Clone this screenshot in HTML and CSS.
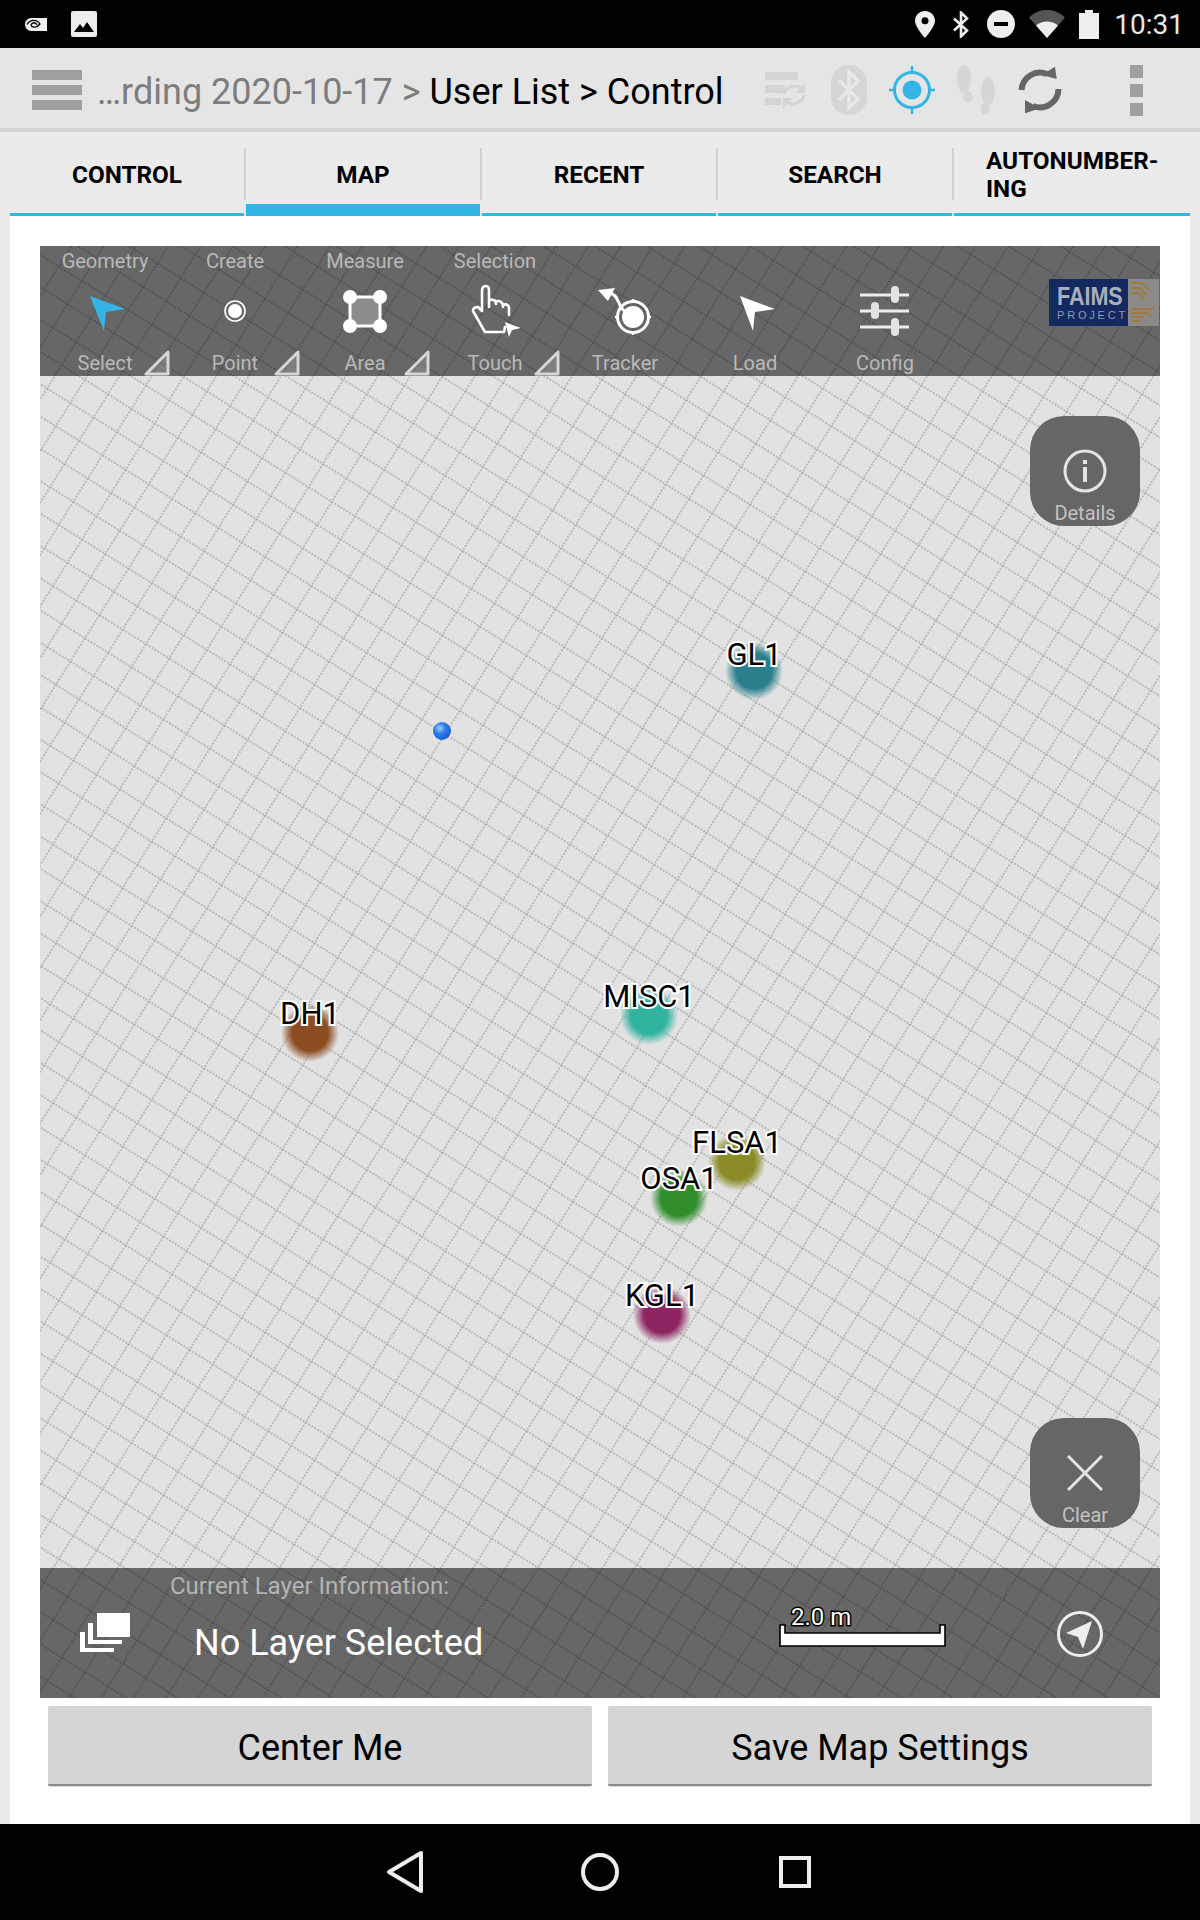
FILE: index.html
```html
<!DOCTYPE html>
<html lang="en">
<head>
  <meta charset="UTF-8">
  <title>Control - Map</title>
  <link rel="stylesheet" href="styles.css">
</head>
<body>

  <div class="status-bar">
    <svg class="st-nvidia" viewBox="0 0 22 13"><path d="M6 0H22V13H6C2 13 0 9 0 6.500 0 4 2 0 6 0Z" fill="#eee"/><path d="M2 6.500C5 1 12 1 15 6 12 10 7 10 6 7 7 4 11 4 12 7" fill="none" stroke="#000" stroke-width="1.300"/></svg>
    <svg class="st-pic" viewBox="0 0 26 26"><rect width="26" height="26" rx="2" fill="#eee"/><path d="M3 21L9 13 12 17 16 11 23 21Z" fill="#000"/></svg>
    <div class="st-right">
      <svg class="st-pin" viewBox="0 0 20 27"><path fill-rule="evenodd" d="M10 0C4.500 0 0 4.300 0 9.800 0 16 10 27 10 27S20 16 20 9.800C20 4.300 15.500 0 10 0ZM10 6.300A3.500 3.500 0 1 1 10 13.300 3.500 3.500 0 0 1 10 6.300Z" fill="#eee"/></svg>
      <svg class="st-bt" viewBox="0 0 18 27"><path d="M2 7.500L15 19.500 9 25.500V1.500L15 7.500 2 19.500" fill="none" stroke="#eee" stroke-width="2.600"/></svg>
      <svg class="st-dnd" viewBox="0 0 28 28"><circle cx="14" cy="14" r="14" fill="#eee"/><rect x="7" y="12" width="14" height="4" fill="#000"/></svg>
      <svg class="st-wifi" viewBox="0 0 36 28"><path d="M0 7.500C10 -2.500 26 -2.500 36 7.500L18 28Z" fill="#555"/><path d="M7 15.500C13 10 23 10 29 15.500L18 28Z" fill="#eee"/></svg>
      <svg class="st-batt" viewBox="0 0 20 29"><path d="M6 0H14V3H20V29H0V3H6Z" fill="#eee"/></svg>
      <span class="clock">10:31</span>
    </div>
  </div>

  <div class="action-bar">
    <div class="hamburger"><span></span><span></span><span></span></div>
    <div class="crumbs"><span class="crumb-old">…rding 2020-10-17 &gt; </span>User List &gt; Control</div>
    <div class="action-icons">
      <svg class="ic-storage" viewBox="0 0 40 36"><path d="M0 0H33V8H0ZM0 13H20V21H0ZM0 26H16V33H0Z" fill="#d4d4d4"/><path d="M19 22A11 11 0 0 1 37 17M39 23A11 11 0 0 1 22 30" fill="none" stroke="#d4d4d4" stroke-width="3"/><path d="M40 11V21H30ZM18 36V26H28Z" fill="#d4d4d4"/></svg>
      <svg class="ic-bt" viewBox="0 0 36 50"><rect width="36" height="50" rx="18" fill="#d6d6d6"/><path d="M8 15L27 34 18 43V7L27 16 8 35" fill="none" stroke="#e8e8e8" stroke-width="3.500"/></svg>
      <svg class="ic-gps" viewBox="0 0 46 48"><circle cx="23" cy="24" r="17.500" fill="none" stroke="#33b5e5" stroke-width="3"/><circle cx="23" cy="24" r="9.500" fill="#33b5e5"/><path d="M23 0V7M23 41V48M0 24H6M40 24H46" stroke="#33b5e5" stroke-width="2.500"/></svg>
      <svg class="ic-feet" viewBox="0 0 39 50"><ellipse cx="7" cy="14" rx="7" ry="14" fill="#d6d6d6"/><ellipse cx="11" cy="32" rx="4.500" ry="5.500" fill="#d6d6d6"/><ellipse cx="31" cy="26" rx="7" ry="14" fill="#d6d6d6"/><ellipse cx="28" cy="44" rx="4.500" ry="5.500" fill="#d6d6d6"/></svg>
      <svg class="ic-sync" viewBox="0 0 44 50"><path d="M3.500 25A18.500 18.500 0 0 1 29 9M40.500 24A18.500 18.500 0 0 1 15 41" fill="none" stroke="#666" stroke-width="6"/><path d="M37 1.700L38.700 14 23.700 10ZM7 35V48.300L22 43.300Z" fill="#666"/></svg>
      <div class="overflow"><span></span><span></span><span></span></div>
    </div>
  </div>

  <div class="tabs">
    <div class="tab">CONTROL</div>
    <div class="tab selected">MAP</div>
    <div class="tab">RECENT</div>
    <div class="tab">SEARCH</div>
    <div class="tab tab-wrap">AUTONUMBER-<br>ING</div>
  </div>

  <main class="content">
    <div class="map">
      <svg class="grid" width="1120" height="1452">
        <defs>
          <pattern id="gridCell" width="27.400" height="27.400" patternUnits="userSpaceOnUse" patternTransform="translate(123.300 215) rotate(32) translate(-13.700 -13.700)">
            <path d="M0 13.700H27.400M13.700 0V27.400" stroke="#a0a0a0" stroke-width="1.400" stroke-dasharray="1.712 1.713" fill="none"/>
          </pattern>
        </defs>
        <rect width="1120" height="1452" fill="#e2e2e2"/>
        <rect width="1120" height="1452" fill="url(#gridCell)"/>
      </svg>

      <div class="pin pin-gl"><span class="pin-dot"></span><span class="pin-label">GL1</span></div>
      <div class="pin pin-dh"><span class="pin-dot"></span><span class="pin-label">DH1</span></div>
      <div class="pin pin-misc"><span class="pin-dot"></span><span class="pin-label">MISC1</span></div>
      <div class="pin pin-flsa"><span class="pin-dot"></span><span class="pin-label">FLSA1</span></div>
      <div class="pin pin-osa"><span class="pin-dot"></span><span class="pin-label">OSA1</span></div>
      <div class="pin pin-kgl"><span class="pin-dot"></span><span class="pin-label">KGL1</span></div>
      <div class="me-dot"></div>

      <div class="toolbar">
        <div class="tool">
          <div class="tool-top">Geometry</div>
          <svg class="tool-icon" viewBox="0 0 130 60"><path d="M50 16L85 29 66 32 64 51Z" fill="#33b5e5"/></svg>
          <div class="tool-name">Select</div>
          <svg class="corner" viewBox="0 0 26 26"><path d="M24 2V24H2Z" fill="rgba(255,255,255,.16)" stroke="#d6d6d6" stroke-width="3" stroke-linejoin="round"/></svg>
        </div>
        <div class="tool">
          <div class="tool-top">Create</div>
          <svg class="tool-icon" viewBox="0 0 130 60"><circle cx="65" cy="31" r="10" fill="none" stroke="#fff" stroke-width="1.600"/><circle cx="65" cy="31" r="7" fill="#fff"/></svg>
          <div class="tool-name">Point</div>
          <svg class="corner" viewBox="0 0 26 26"><path d="M24 2V24H2Z" fill="rgba(255,255,255,.16)" stroke="#d6d6d6" stroke-width="3" stroke-linejoin="round"/></svg>
        </div>
        <div class="tool">
          <div class="tool-top">Measure</div>
          <svg class="tool-icon" viewBox="0 0 130 60"><rect x="50" y="17" width="30" height="29" fill="#8c8c8c" stroke="#fff" stroke-width="3"/><circle cx="50" cy="17" r="7" fill="#fff"/><circle cx="80" cy="17" r="7" fill="#fff"/><circle cx="50" cy="46" r="7" fill="#fff"/><circle cx="80" cy="46" r="7" fill="#fff"/></svg>
          <div class="tool-name">Area</div>
          <svg class="corner" viewBox="0 0 26 26"><path d="M24 2V24H2Z" fill="rgba(255,255,255,.16)" stroke="#d6d6d6" stroke-width="3" stroke-linejoin="round"/></svg>
        </div>
        <div class="tool">
          <div class="tool-top">Selection</div>
          <svg class="tool-icon" viewBox="0 0 130 60"><path d="M52 31V11Q52 6 56 6 59 6 59 11V27M59 21Q61 19 63 20 66 20 66 24M66 22Q68 20 71 22 73 23 73 27M73 25Q77 23 79 27V35M52 31L48 27Q43 27 43 31L55 52H74L75 47" fill="none" stroke="#fff" stroke-width="2.600" stroke-linecap="round" stroke-linejoin="round"/><path d="M75 42L91 48 82 50 79 57Z" fill="#fff"/></svg>
          <div class="tool-name">Touch</div>
          <svg class="corner" viewBox="0 0 26 26"><path d="M24 2V24H2Z" fill="rgba(255,255,255,.16)" stroke="#d6d6d6" stroke-width="3" stroke-linejoin="round"/></svg>
        </div>
        <div class="tool">
          <div class="tool-top"></div>
          <svg class="tool-icon" viewBox="0 0 130 60"><path d="M38 10L55 8 48 21Z" fill="#fff"/><path d="M50 13Q56 15 58 21T65 32" fill="none" stroke="#fff" stroke-width="3"/><circle cx="73" cy="37" r="11" fill="#fff"/><circle cx="73" cy="37" r="15.500" fill="none" stroke="#fff" stroke-width="3"/><path d="M73 19V23M73 51V55M55 37H59M87 37H91" stroke="#fff" stroke-width="2.500"/></svg>
          <div class="tool-name">Tracker</div>
        </div>
        <div class="tool">
          <div class="tool-top"></div>
          <svg class="tool-icon" viewBox="0 0 130 60"><path d="M50 16L85 29 65 32 63 51Z" fill="#fff"/></svg>
          <div class="tool-name">Load</div>
        </div>
        <div class="tool">
          <div class="tool-top"></div>
          <svg class="tool-icon" viewBox="0 0 130 60"><path d="M40 15H89M40 31H89M40 47H89" stroke="#eee" stroke-width="3"/><rect x="71" y="6" width="8" height="17" rx="4" fill="#e2e2e2"/><rect x="51" y="22" width="8" height="17" rx="4" fill="#e2e2e2"/><rect x="71" y="38" width="8" height="18" rx="4" fill="#e2e2e2"/></svg>
          <div class="tool-name">Config</div>
        </div>
        <div class="logo">
          <div class="logo-main"><span class="logo-faims">FAIMS</span><span class="logo-project">PROJECT</span></div>
          <svg class="logo-side" viewBox="0 0 31 47"><rect width="31" height="47" fill="#8b8a86"/><path d="M3 4H14L21 11M3 9H12L18 16M3 14H10L16 20M3 30H26M3 34H19L24 38M3 38H15M3 42H12" stroke="#a8742e" stroke-width="1.400" fill="none"/></svg>
        </div>
      </div>

      <div class="bottom-bar">
        <svg class="layers" viewBox="0 0 50 39"><path d="M17 0H50V24H17ZM8 10H13V27H42V31H8ZM0 19H5V35H34V39H0Z" fill="#fff"/></svg>
        <div class="layer-info">
          <div class="layer-caption">Current Layer Information:</div>
          <div class="layer-name">No Layer Selected</div>
        </div>
        <div class="scale">
          <span class="scale-text">2.0 m</span>
          <svg class="scale-bar" viewBox="0 0 167 23"><path d="M1 1H6V9H161V1H166V22H1Z" fill="#fff" stroke="#000" stroke-width="1.600"/></svg>
        </div>
        <svg class="compass" viewBox="0 0 46 46"><circle cx="23" cy="23" r="21.500" fill="none" stroke="#eee" stroke-width="3"/><path d="M35 10L9 22 21 26 26 38Z" fill="#eee"/></svg>
      </div>

      <div class="float-btn float-details">
        <svg class="float-icon" viewBox="0 0 44 44"><circle cx="22" cy="22" r="20" fill="none" stroke="#e4e4e4" stroke-width="3"/><rect x="20" y="18" width="4" height="15" fill="#e4e4e4"/><rect x="20" y="11" width="4" height="4" fill="#e4e4e4"/></svg>
        <span class="float-label">Details</span>
      </div>
      <div class="float-btn float-clear">
        <svg class="float-icon" viewBox="0 0 36 36"><path d="M1 1L35 35M35 1L1 35" stroke="#e4e4e4" stroke-width="3"/></svg>
        <span class="float-label">Clear</span>
      </div>
    </div>

    <div class="buttons">
      <button class="btn">Center Me</button>
      <button class="btn">Save Map Settings</button>
    </div>
  </main>

  <div class="nav-bar">
    <svg viewBox="0 0 40 44"><path d="M36 3V41L4 22Z" fill="none" stroke="#eee" stroke-width="4" stroke-linejoin="round"/></svg>
    <svg viewBox="0 0 40 44"><circle cx="20" cy="22" r="17" fill="none" stroke="#eee" stroke-width="4"/></svg>
    <svg viewBox="0 0 40 44"><rect x="6" y="8" width="28" height="28" fill="none" stroke="#eee" stroke-width="4"/></svg>
  </div>

</body>
</html>
```

FILE: styles.css
```css
* {
  box-sizing: border-box;
}

body {
  margin: 0;
  width: 1200px;
  height: 1920px;
  display: flex;
  flex-direction: column;
  font-family: Roboto, "Liberation Sans", sans-serif;
  background: #ebebeb;
  color: #000;
  overflow: hidden;
}

/* status bar */
.status-bar {
  height: 48px;
  flex: none;
  background: #000;
  display: flex;
  align-items: center;
  padding: 0 16px 0 25px;
}

.st-nvidia { width: 22px; height: 13px; }
.st-pic { width: 26px; height: 26px; margin-left: 24px; }

.st-right {
  margin-left: auto;
  display: flex;
  align-items: center;
  gap: 14px;
}

.st-pin { width: 20px; height: 27px; }
.st-bt { width: 18px; height: 27px; margin: 0 3px; }
.st-dnd { width: 28px; height: 28px; }
.st-wifi { width: 36px; height: 28px; }
.st-batt { width: 20px; height: 29px; }

.clock {
  font-size: 28px;
  color: #e8e8e8;
  margin-left: 1px;
}

/* action bar */
.action-bar {
  height: 84px;
  flex: none;
  background: #e5e5e5;
  border-bottom: 4px solid #d3d3d3;
  display: flex;
  align-items: center;
  padding: 4px 0 0 32px;
}

.hamburger {
  width: 50px;
  display: flex;
  flex-direction: column;
  gap: 5px;
}

.hamburger span {
  height: 10px;
  background: #a0a0a0;
}

.crumbs {
  margin-left: 15px;
  padding-top: 4px;
  font-size: 36px;
  white-space: nowrap;
}

.crumb-old {
  color: #7d7d7d;
}

.action-icons {
  margin-left: auto;
  margin-right: 57px;
  display: flex;
  align-items: center;
  gap: 22px;
}

.ic-storage { width: 40px; height: 36px; margin-right: 4px; }
.ic-bt { width: 36px; height: 50px; }
.ic-gps { width: 46px; height: 48px; }
.ic-feet { width: 39px; height: 50px; }
.ic-sync { width: 44px; height: 50px; }

.overflow {
  width: 13px;
  margin-left: 46px;
  display: flex;
  flex-direction: column;
  gap: 6px;
}

.overflow span {
  height: 13px;
  background: #a0a0a0;
}

/* tabs */
.tabs {
  height: 84px;
  flex: none;
  margin: 0 10px;
  display: grid;
  grid-template-columns: repeat(4, 236px) 1fr;
}

.tab {
  position: relative;
  display: flex;
  align-items: center;
  justify-content: center;
  margin-right: 2px;
  padding-top: 4px;
  border-bottom: 3px solid #33b5e5;
  font-size: 24.300px;
  font-weight: bold;
}

.tab::after {
  content: '';
  position: absolute;
  top: 16px;
  right: -2px;
  width: 2px;
  height: 52px;
  background: #d0d0d0;
}

.tab.selected {
  border-bottom-width: 12px;
  padding-top: 13px;
}

.tab-wrap {
  justify-content: flex-start;
  padding-left: 32px;
  margin-right: 0;
  line-height: 28px;
}

.tab-wrap::after {
  display: none;
}

/* content */
.content {
  flex: 1;
  margin: 0 10px;
  padding: 30px 30px 0 30px;
  background: #fff;
}

.map {
  position: relative;
  height: 1452px;
  display: flex;
  flex-direction: column;
  justify-content: space-between;
  overflow: hidden;
}

.grid {
  position: absolute;
  left: 0;
  top: 0;
}

/* markers, placed by their map position */
.pin {
  position: absolute;
  width: 0;
  height: 0;
}

.pin-dot {
  position: absolute;
  left: -29px;
  top: -29px;
  width: 58px;
  height: 58px;
  border-radius: 50%;
}

.pin-label {
  position: absolute;
  left: 0;
  top: -20px;
  transform: translate(-50%, -50%);
  font-size: 31px;
  line-height: 1;
  color: #000;
  -webkit-text-stroke: 4px #fff;
  paint-order: stroke fill;
  white-space: nowrap;
}

.pin-gl { left: 714px; top: 425px; }
.pin-gl .pin-dot { background: radial-gradient(closest-side, #2b7f8d 62%, rgba(43, 127, 141, 0) 100%); }
.pin-gl .pin-label { top: -17px; }

.pin-dh { left: 270px; top: 787px; }
.pin-dh .pin-dot { background: radial-gradient(closest-side, #8b4c22 62%, rgba(139, 76, 34, 0) 100%); }

.pin-misc { left: 609px; top: 770px; }
.pin-misc .pin-dot { background: radial-gradient(closest-side, #2fb39f 62%, rgba(47, 179, 159, 0) 100%); }

.pin-flsa { left: 697px; top: 916px; }
.pin-flsa .pin-dot { background: radial-gradient(closest-side, #8b8c27 62%, rgba(139, 140, 39, 0) 100%); }

.pin-osa { left: 639px; top: 952px; }
.pin-osa .pin-dot { background: radial-gradient(closest-side, #2f8d2b 62%, rgba(47, 141, 43, 0) 100%); }

.pin-kgl { left: 622px; top: 1069px; }
.pin-kgl .pin-dot { background: radial-gradient(closest-side, #8e2563 62%, rgba(142, 37, 99, 0) 100%); }
.pin-kgl .pin-label { top: -20px; }

.me-dot {
  position: absolute;
  left: 393px;
  top: 476px;
  width: 18px;
  height: 18px;
  border-radius: 50%;
  background: radial-gradient(circle at 38% 35%, #9fd0ff 0, #2f7de8 35%, #1a5fd8 70%, #8db8ec 100%);
}

/* top toolbar */
.toolbar {
  position: relative;
  height: 130px;
  flex: none;
  display: flex;
  background: rgba(0, 0, 0, .545);
}

.tool {
  position: relative;
  width: 130px;
  text-align: center;
  font-size: 20px;
  color: #b9b9b9;
}

.tool-top {
  height: 34px;
  line-height: 30px;
}

.tool-icon {
  display: block;
  width: 130px;
  height: 60px;
}

.tool-name {
  padding-top: 10px;
  line-height: 26px;
}

.corner {
  position: absolute;
  right: 0;
  bottom: 0;
  width: 26px;
  height: 26px;
}

.logo {
  margin: 33px 1px 0 auto;
  width: 110px;
  height: 47px;
  display: flex;
}

.logo-main {
  width: 79px;
  background: #14295f;
  padding: 4px 0 0 8px;
  display: flex;
  flex-direction: column;
}

.logo-faims {
  font-family: "Liberation Sans", sans-serif;
  font-weight: bold;
  font-size: 25px;
  line-height: 26px;
  color: #a9afbf;
  transform: scaleX(.86);
  transform-origin: left;
}

.logo-project {
  font-family: "Liberation Sans", sans-serif;
  font-size: 11px;
  line-height: 13px;
  letter-spacing: 2.800px;
  color: #8f98ad;
}

.logo-side {
  width: 31px;
  height: 47px;
}

/* bottom toolbar */
.bottom-bar {
  position: relative;
  height: 130px;
  flex: none;
  display: flex;
  align-items: flex-start;
  background: rgba(0, 0, 0, .545);
}

.layers {
  width: 50px;
  height: 39px;
  margin: 45px 0 0 40px;
}

.layer-info {
  margin-left: 40px;
  width: 609px;
}

.layer-caption {
  font-size: 24px;
  line-height: 36px;
  color: #b4b4b4;
}

.layer-name {
  margin: 17px 0 0 24px;
  font-size: 36px;
  line-height: 44px;
  color: #fff;
}

.scale {
  width: 167px;
  margin-top: 38px;
}

.scale-text {
  display: block;
  margin-left: 12px;
  font-size: 24px;
  line-height: 22px;
  color: #fff;
  -webkit-text-stroke: 3px #000;
  paint-order: stroke fill;
}

.scale-bar {
  display: block;
  width: 167px;
  height: 23px;
  margin-top: -4px;
}

.compass {
  width: 46px;
  height: 46px;
  margin: 43px 0 0 111px;
}

/* round overlay buttons on the map */
.float-btn {
  position: absolute;
  right: 20px;
  width: 110px;
  height: 110px;
  border-radius: 34px;
  background: #666;
  display: flex;
  flex-direction: column;
  align-items: center;
}

.float-details { top: 170px; padding-top: 33px; }
.float-clear { bottom: 170px; padding-top: 37px; }

.float-details .float-icon { width: 44px; height: 44px; }
.float-clear .float-icon { width: 36px; height: 36px; }

.float-label {
  font-size: 20px;
  line-height: 26px;
  color: #c2c2c2;
}

.float-details .float-label { margin-top: 7px; }
.float-clear .float-label { margin-top: 11px; }

/* buttons under the map */
.buttons {
  margin-top: 8px;
  padding: 0 8px;
  display: flex;
  gap: 16px;
}

.btn {
  flex: 1;
  height: 80px;
  border: none;
  border-bottom: 2px solid #8a8a8a;
  border-radius: 2px;
  background: #d5d5d5;
  box-shadow: 0 1px 1px rgba(0, 0, 0, .15);
  font-family: inherit;
  font-size: 36px;
  color: #000;
  padding: 5px 0 0;
}

/* android nav */
.nav-bar {
  height: 96px;
  flex: none;
  background: #000;
  display: flex;
  align-items: center;
  justify-content: center;
  gap: 155px;
}

.nav-bar svg {
  width: 40px;
  height: 44px;
}
```
